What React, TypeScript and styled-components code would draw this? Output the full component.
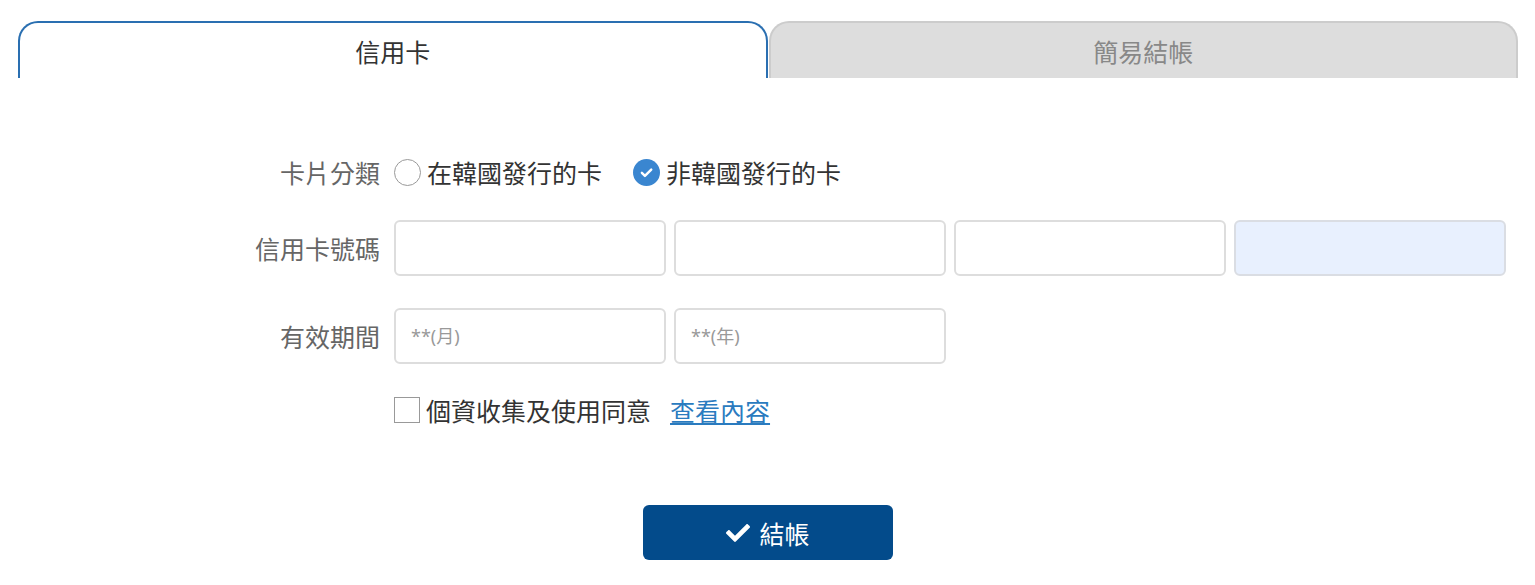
import React from "react";
import styled, { createGlobalStyle } from "styled-components";

const Global = createGlobalStyle`
  html, body { margin: 0; padding: 0; background: #fff; }
  body { font-family: "Noto Sans", "Noto Sans CJK TC", sans-serif; color: #333; }
  * { box-sizing: border-box; }
`;

const Page = styled.div`
  padding: 21px 17px 0 18px;
`;

const Tabs = styled.div`
  display: flex;
  gap: 1px;
  height: 57px;
`;

const Tab = styled.div<{ $active?: boolean }>`
  flex: 1;
  border: 2px solid ${(p) => (p.$active ? "#2a6fb1" : "#cccccc")};
  border-bottom: none;
  border-radius: 20px 20px 0 0;
  background: ${(p) => (p.$active ? "#fff" : "#dddddd")};
  color: ${(p) => (p.$active ? "#333" : "#888")};
  font-size: 25px;
  text-align: center;
  padding-top: 11px;
  line-height: 36px;
  font-weight: 400;
`;

const Form = styled.div`
  display: grid;
  grid-template-columns: 362px 1112px;
  column-gap: 14px;
  padding-top: 74px;
`;

const Label = styled.div<{ $mt?: number; $h: number }>`
  margin-top: ${(p) => p.$mt ?? 0}px;
  height: ${(p) => p.$h}px;
  display: flex;
  align-items: center;
  justify-content: flex-end;
  font-size: 25px;
  color: #666;
`;

const Field = styled.div<{ $mt?: number; $h: number }>`
  margin-top: ${(p) => p.$mt ?? 0}px;
  height: ${(p) => p.$h}px;
  display: flex;
  align-items: center;
  font-size: 25px;
  color: #333;
`;

const RadioGroup = styled.label`
  display: flex;
  align-items: center;
  gap: 6px;
  margin-right: 31px;
`;

const RadioCircle = styled.span<{ $checked?: boolean }>`
  width: 27px;
  height: 27px;
  border-radius: 50%;
  border: ${(p) => (p.$checked ? "none" : "1px solid #999")};
  background: ${(p) => (p.$checked ? "#3a86d0" : "#fff")};
  display: inline-flex;
  align-items: center;
  justify-content: center;
`;

const InputRow = styled.div`
  display: grid;
  grid-template-columns: repeat(4, 272px);
  gap: 8px;
  width: 100%;
  height: 100%;
`;

const Input = styled.input<{ $filled?: boolean }>`
  height: 100%;
  width: 100%;
  border: 2px solid ${(p) => (p.$filled ? "#dadde3" : "#dddddd")};
  border-radius: 6px;
  background: ${(p) => (p.$filled ? "#e8f0fe" : "#fff")};
  padding: 0 15px;
  font-size: 18px;
  font-family: "Noto Sans", "Noto Sans CJK TC", sans-serif;
  outline: none;
  &::placeholder { color: #999; }
`;

const Check = styled.span`
  width: 26px;
  height: 26px;
  border: 1px solid #999;
  background: #fff;
  margin-right: 6px;
`;

const Link = styled.a`
  color: #2a7bbf;
  text-decoration: underline;
  margin-left: 19px;
  cursor: pointer;
`;

const ButtonWrap = styled.div`
  display: flex;
  justify-content: center;
  margin-top: 75px;
`;

const Button = styled.button`
  width: 250px;
  height: 55px;
  border: none;
  border-radius: 6px;
  background: #034b8b;
  color: #fff;
  font-size: 25px;
  font-family: "Noto Sans", "Noto Sans CJK TC", sans-serif;
  display: flex;
  align-items: center;
  justify-content: center;
  gap: 9px;
  padding: 0;
`;

const CheckMark = ({ size, color }: { size: number; color: string }) => (
  <svg width={size} height={size} viewBox="0 0 512 512" aria-hidden>
    <path
      fill={color}
      d="M173.9 439.4l-166.4-166.4c-10-10-10-26.2 0-36.2l36.2-36.2c10-10 26.2-10 36.2 0L192 312.7 432.1 72.6c10-10 26.2-10 36.2 0l36.2 36.2c10 10 10 26.2 0 36.2l-294.4 294.4c-10 10-26.2 10-36.2 0z"
    />
  </svg>
);

const SmallCheck = () => (
  <svg width="17" height="17" viewBox="0 0 14 14" aria-hidden>
    <path d="M3.2 7.3l2.5 2.5L10.9 4.6" fill="none" stroke="#fff" strokeWidth="2" strokeLinecap="round" strokeLinejoin="round" />
  </svg>
);

export default function App() {
  return (
    <Page>
      <Global />
      <Tabs>
        <Tab $active>信用卡</Tab>
        <Tab>簡易結帳</Tab>
      </Tabs>
      <Form>
        <Label $h={40}>卡片分類</Label>
        <Field $h={40}>
          <RadioGroup>
            <RadioCircle />
            在韓國發行的卡
          </RadioGroup>
          <RadioGroup>
            <RadioCircle $checked>
              <SmallCheck />
            </RadioCircle>
            非韓國發行的卡
          </RadioGroup>
        </Field>

        <Label $mt={28} $h={56}>信用卡號碼</Label>
        <Field $mt={28} $h={56}>
          <InputRow>
            <Input />
            <Input />
            <Input />
            <Input $filled />
          </InputRow>
        </Field>

        <Label $mt={32} $h={56}>有效期間</Label>
        <Field $mt={32} $h={56}>
          <InputRow>
            <Input placeholder="**(月)" />
            <Input placeholder="**(年)" />
          </InputRow>
        </Field>

        <div />
        <Field $mt={26} $h={40}>
          <Check />
          個資收集及使用同意
          <Link>查看內容</Link>
        </Field>
      </Form>
      <ButtonWrap>
        <Button>
          <CheckMark size={24} color="#fff" />
          結帳
        </Button>
      </ButtonWrap>
    </Page>
  );
}
